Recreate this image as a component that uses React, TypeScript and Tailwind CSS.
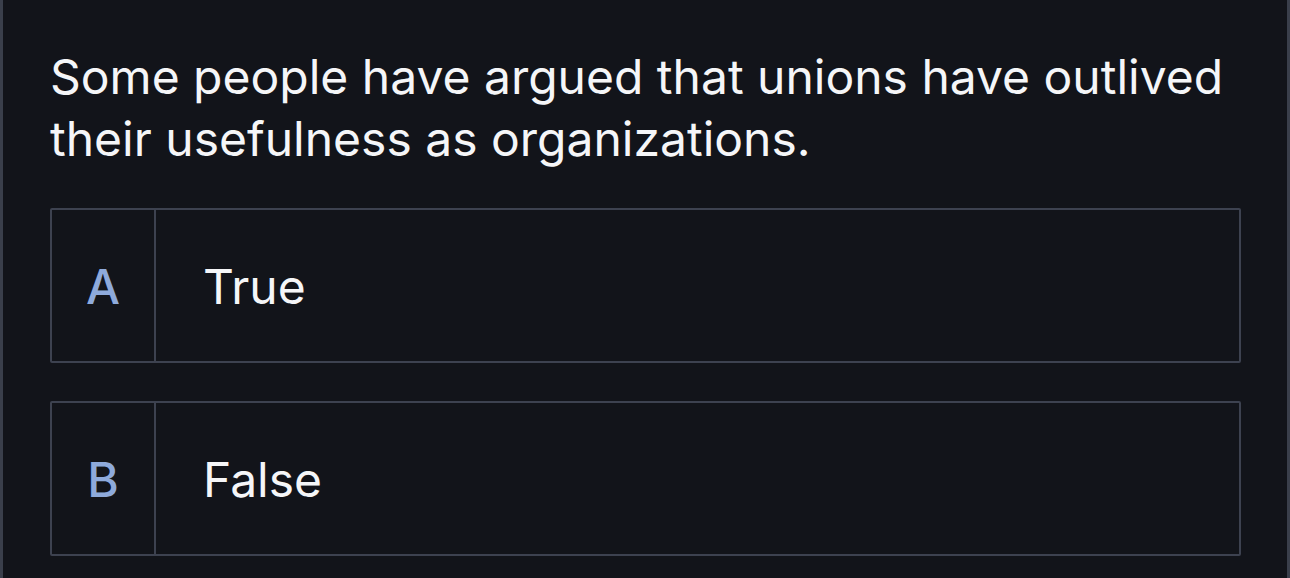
const options = [
  { key: 'A', label: 'True' },
  { key: 'B', label: 'False' },
];

export default function App() {
  return (
    <div
      className="w-[1290px] h-[578px] bg-[#12141a] border-x-[3px] border-[#3a3f4b] text-white overflow-hidden"
      style={{ fontFamily: 'Inter, "Open Sans", sans-serif' }}
    >
      <div className="pl-[47px] pr-[46px] pt-[46px]">
        <p className="text-[48px] leading-[62px] text-[#f5f6f8]">
          Some people have argued that unions have outlived their usefulness as organizations.
        </p>

        <div className="mt-[38px] flex flex-col gap-[38px]">
          {options.map((o) => (
            <div
              key={o.key}
              className="flex h-[155px] border-2 border-[#3d4250] rounded-[2px]"
            >
              <div className="w-[104px] border-r-2 border-[#3d4250] flex items-center justify-center pt-[3px] text-[48px] font-medium text-[#8eaadb]">
                {o.key}
              </div>
              <div className="flex items-center pl-[47px] pt-[3px] text-[48px] text-[#f5f6f8]">
                {o.label}
              </div>
            </div>
          ))}
        </div>
      </div>
    </div>
  );
}
